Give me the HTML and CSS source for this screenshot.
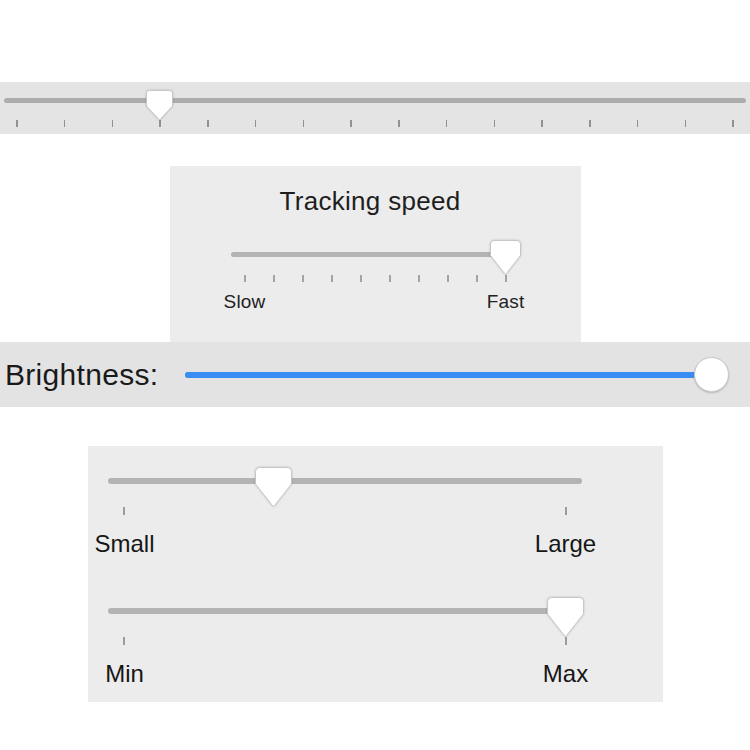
FILE: index.html
```html
<!DOCTYPE html>
<html lang="en">
<head>
<meta charset="utf-8">
<title>Sliders</title>
<link rel="stylesheet" href="styles.css">
</head>
<body>
<div class="page">
  <section class="bar bar-top">
    <div class="slider slider-top" style="--v: 0.2">
      <div class="track"></div>
      <div class="ticks">
        <span></span><span></span><span></span><span></span><span></span><span></span><span></span><span></span>
        <span></span><span></span><span></span><span></span><span></span><span></span><span></span><span></span>
      </div>
      <div class="rail">
        <svg class="thumb" width="27" height="30" viewBox="0 0 27 30"><path d="M3.5 0.5 H23.5 Q26.5 0.5 26.5 3.5 V16 L14.2 29.2 Q13.5 29.9 12.8 29.2 L0.5 16 V3.5 Q0.5 0.5 3.5 0.5 Z"/></svg>
      </div>
    </div>
  </section>

  <section class="panel panel-tracking">
    <h2 class="title">Tracking speed</h2>
    <div class="slider slider-tracking" style="--v: 1">
      <div class="track"></div>
      <div class="ticks">
        <span></span><span></span><span></span><span></span><span></span><span></span><span></span><span></span><span></span><span></span>
      </div>
      <div class="rail">
        <svg class="thumb" width="31" height="35" viewBox="0 0 31 35"><path d="M4 0.5 H27 Q30.5 0.5 30.5 4 V15.5 L16.2 33.8 Q15.5 34.5 14.8 33.8 L0.5 15.5 V4 Q0.5 0.5 4 0.5 Z"/></svg>
      </div>
    </div>
    <div class="labels labels-tracking"><span>Slow</span><span>Fast</span></div>
  </section>

  <section class="bar bar-brightness">
    <div class="bright-label">Brightness:</div>
    <div class="slider slider-bright" style="--v: 1">
      <div class="track"><div class="fill"></div></div>
      <div class="rail"><div class="knob"></div></div>
    </div>
  </section>

  <section class="panel panel-size">
    <div class="slider slider-size" style="--v: 0.34">
      <div class="track"></div>
      <div class="ticks"><span></span><span></span></div>
      <div class="rail">
        <svg class="thumb" width="37" height="40" viewBox="0 0 37 40"><path d="M4.5 0.5 H32.5 Q36.5 0.5 36.5 4.5 V17 L19.2 39 Q18.5 39.7 17.8 39 L0.5 17 V4.5 Q0.5 0.5 4.5 0.5 Z"/></svg>
      </div>
    </div>
    <div class="labels labels-size"><span>Small</span><span>Large</span></div>

    <div class="slider slider-size slider-second" style="--v: 1">
      <div class="track"></div>
      <div class="ticks"><span></span><span></span></div>
      <div class="rail">
        <svg class="thumb" width="37" height="40" viewBox="0 0 37 40"><path d="M4.5 0.5 H32.5 Q36.5 0.5 36.5 4.5 V17 L19.2 39 Q18.5 39.7 17.8 39 L0.5 17 V4.5 Q0.5 0.5 4.5 0.5 Z"/></svg>
      </div>
    </div>
    <div class="labels labels-size"><span>Min</span><span>Max</span></div>
  </section>
</div>
</body>
</html>
```

FILE: styles.css
```css
* { box-sizing: border-box; }

html, body {
  margin: 0;
  padding: 0;
  background: #ffffff;
}

body {
  font-family: "Liberation Sans", Arial, sans-serif;
  color: #1b1b1b;
}

.page {
  padding-top: 82px;
  width: 750px;
}

/* generic slider */
.slider {
  position: relative;
}

.track {
  background: #b3b3b3;
  border-radius: 4px;
  position: relative;
}

.ticks {
  display: flex;
  justify-content: space-between;
}

.ticks span {
  display: block;
}

.rail {
  position: absolute;
  top: 0;
  height: 0;
}

.thumb {
  position: absolute;
  top: 0;
  overflow: visible;
  filter: drop-shadow(0 0.5px 0.8px rgba(0, 0, 0, 0.18));
}

.thumb path {
  fill: #ffffff;
  stroke: #c6c6c6;
  stroke-width: 1;
}

/* top bar */
.bar-top {
  background: #e4e4e4;
  padding: 8px 4px 7px 4px;
}

.slider-top {
  padding-top: 8px;
}

.slider-top .track {
  height: 5px;
  background: #adadad;
}

.slider-top .ticks {
  margin-top: 17px;
  padding: 0 12px;
}

.slider-top .ticks span {
  width: 1.5px;
  height: 7px;
  background: #919191;
}

.slider-top .rail {
  left: 12px;
  right: 12px;
}

.slider-top .thumb {
  left: calc(var(--v) * 100%);
  margin-left: -13.5px;
}

/* tracking panel */
.panel {
  background: #ececec;
}

.panel-tracking {
  width: 411px;
  margin: 32px auto 0;
  padding: 22px 0 31px;
}

.title {
  margin: 0;
  padding-right: 10px;
  font-size: 26px;
  line-height: 26px;
  letter-spacing: 0.3px;
  font-weight: normal;
  text-align: center;
  color: #1e1e1e;
}

.slider-tracking {
  width: 289px;
  margin: 26px auto 0;
  padding-top: 12px;
}

.slider-tracking .track {
  height: 5px;
}

.slider-tracking .ticks {
  margin-top: 18px;
  padding: 0 13px;
}

.slider-tracking .ticks span {
  width: 2px;
  height: 7px;
  background: #a3a3a3;
}

.slider-tracking .rail {
  left: 14px;
  right: 14px;
}

.slider-tracking .thumb {
  left: calc(var(--v) * 100%);
  margin-left: -15.5px;
}

.labels {
  display: flex;
  justify-content: space-between;
}

.labels span {
  display: flex;
  justify-content: center;
  white-space: nowrap;
}

.labels-tracking {
  width: 289px;
  margin: 10px auto 0;
  font-size: 19px;
  line-height: 19px;
  letter-spacing: 0.2px;
  color: #222;
}

.labels-tracking span {
  width: 28px;
}

/* brightness bar */
.bar-brightness {
  display: flex;
  align-items: center;
  height: 65px;
  background: #e3e3e3;
  padding: 0 21px 0 5px;
}

.bright-label {
  flex: none;
  width: 180px;
  font-size: 30px;
  line-height: 30px;
  letter-spacing: 0.3px;
  color: #1a1a1a;
}

.slider-bright {
  flex: 1;
  height: 35px;
  display: flex;
  align-items: center;
}

.slider-bright .track {
  flex: 1;
  height: 6px;
  border-radius: 3px;
  background: #b3b3b3;
}

.slider-bright .fill {
  height: 100%;
  width: calc(17.5px + (100% - 35px) * var(--v));
  background: #3a8ef3;
  border-radius: 3px;
}

.slider-bright .rail {
  left: 17.5px;
  right: 17.5px;
}

.knob {
  position: absolute;
  top: 0;
  left: calc(var(--v) * 100%);
  margin-left: -17.5px;
  width: 35px;
  height: 35px;
  border-radius: 50%;
  background: #ffffff;
  border: 1px solid #c9c9c9;
  box-shadow: 0 1px 2px rgba(0, 0, 0, 0.2);
}

/* size panel */
.panel-size {
  width: 575px;
  margin: 39px auto 0;
  padding: 21px 81px 16px 20px;
}

.slider-size {
  width: 474px;
  padding-top: 11px;
}

.slider-second {
  margin-top: 41px;
}

.slider-size .track {
  height: 6px;
  border-radius: 3px;
}

.slider-size .ticks {
  margin-top: 23px;
  padding: 0 15px;
}

.slider-size .ticks span {
  width: 2px;
  height: 8px;
  background: #9c9c9c;
}

.slider-size .rail {
  left: 16px;
  right: 16px;
}

.slider-size .thumb {
  left: calc(var(--v) * 100%);
  margin-left: -18.5px;
}

.labels-size {
  width: 474px;
  margin-top: 17px;
  font-size: 24px;
  line-height: 24px;
  color: #161616;
}

.labels-size span {
  width: 32px;
}

.labels-size span:first-child {
  margin-left: 1px;
}
```
